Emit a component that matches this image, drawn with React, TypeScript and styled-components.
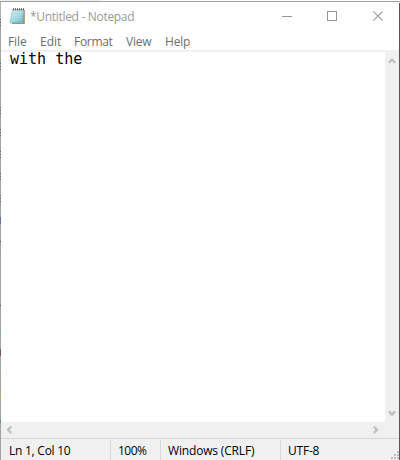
import React from "react";
import styled, { createGlobalStyle } from "styled-components";

const GlobalStyle = createGlobalStyle`
  * { box-sizing: border-box; }
  html, body { margin: 0; padding: 0; background: #fff; overflow: hidden; }
`;

const Window = styled.div`
  width: 400px;
  height: 460px;
  display: grid;
  grid-template-columns: 1px 398px 1px;
  grid-template-rows: 1px 1px 458px;
  background: #fff;
  font-family: "Open Sans", "Noto Sans", sans-serif;
  font-size: 12px;
  line-height: 16px;
`;

const Backdrop = styled.div`
  grid-column: 1 / -1;
  background: linear-gradient(to right, #eeeeee 101px, #ffffff 101px);
`;

const TopEdge = styled.div`
  grid-column: 1 / -1;
  background: #a0a0a0;
`;

const LeftEdge = styled.svg`
  display: block;
  width: 1px;
  height: 458px;
`;

const RightEdge = styled.div`
  background: linear-gradient(#fff 1px, #555555 1px);
`;

const Body = styled.div`
  display: flex;
  flex-direction: column;
  min-width: 0;
`;

const TitleBar = styled.div`
  height: 30px;
  display: flex;
  align-items: flex-start;
  padding-left: 8px;
  color: #999;
`;

const AppIcon = styled.svg`
  display: block;
  width: 17px;
  height: 18px;
  margin-top: 5px;
`;

const Title = styled.span`
  flex: 1;
  margin: 7px 0 0 4px;
`;

const Label = styled.span<{ $spacing?: number }>`
  white-space: pre;
  letter-spacing: ${(p) => p.$spacing ?? 0}px;
`;

const Controls = styled.svg`
  display: block;
  width: 138px;
  height: 30px;
`;

const MenuBar = styled.div`
  height: 18px;
  display: flex;
  padding-left: 7px;
  color: #6d6d6d;
`;

const MenuItem = styled.div<{ $width: number }>`
  width: ${(p) => p.$width}px;
  padding-top: 2px;
`;

const Main = styled.div`
  height: 372px;
  display: grid;
  grid-template-columns: 384px 14px;
  border-top: 2px solid #f0f0f0;
`;

const TextArea = styled.div`
  background: #fff;
  padding-left: 9px;
  color: #000;
  font: 15px/14px "DejaVu Sans Mono", monospace;
  white-space: pre;
`;

const VerticalScroll = styled.div`
  background: #f0f0f0;
  display: flex;
  flex-direction: column;
  justify-content: space-between;
  padding: 5px 0 5px 3px;
`;

const HorizontalScroll = styled.div`
  height: 16px;
  background: #f0f0f0;
  display: flex;
  justify-content: space-between;
  padding: 4px 20px 0 5px;
`;

const Arrow = styled.svg`
  display: block;
  width: 8px;
  height: 8px;
  overflow: visible;
  fill: none;
  stroke: #bfbfbf;
  stroke-width: 2.2;
`;

const StatusBar = styled.div`
  height: 22px;
  display: flex;
  background: #f0f0f0;
  border-top: 1px solid #d7d7d7;
  color: #000;
`;

const StatusCell = styled.div<{ $width: number; $divided?: boolean }>`
  width: ${(p) => p.$width}px;
  height: 20px;
  margin-top: 1px;
  padding: 3px 0 0 ${(p) => (p.$divided ? 7 : 8)}px;
  border-left: ${(p) => (p.$divided ? "1px solid #d7d7d7" : "none")};
`;

const Grip = styled.svg`
  display: block;
  width: 8px;
  height: 8px;
  margin: 12px 0 0 auto;
  fill: #bfbfbf;
`;

const edgeMarks: [number, number, string][] = [
  [0, 17, "#b0b0b0"],
  [17, 1, "#4f6675"], [20, 1, "#8a4d50"], [23, 1, "#5a7184"],
  [61, 1, "#56707b"], [64, 1, "#56707b"], [67, 1, "#56707b"],
  [105, 1, "#56707b"], [108, 1, "#56707b"], [111, 1, "#56707b"],
  [127, 1, "#56707b"], [130, 1, "#56707b"], [133, 1, "#56707b"],
  [149, 1, "#56707b"], [152, 1, "#56707b"], [155, 1, "#56707b"],
  [171, 1, "#56707b"], [174, 1, "#56707b"], [177, 1, "#56707b"],
  [193, 1, "#56707b"], [196, 1, "#56707b"], [199, 1, "#56707b"],
  [215, 7, "#60799a"], [239, 1, "#555"], [240, 10, "#9c9cab"],
  [303, 1, "#555"], [325, 8, "#8ca9a9"], [347, 7, "#7b5362"],
  [371, 3, "#b89e6c"], [388, 10, "#b5a780"], [418, 3, "#6384a0"],
];

const menus: [string, number, number][] = [
  ["File", 32, -0.1],
  ["Edit", 34, 0],
  ["Format", 52, -0.3],
  ["View", 39, -0.2],
  ["Help", 40, -0.2],
];

const statuses: [string, number, number][] = [
  ["Ln 1, Col 10", 109, -0.25],
  ["100%", 50, -0.5],
  ["Windows (CRLF)", 120, -0.17],
  ["UTF-8", 110, -0.2],
];

export default function App() {
  return (
    <>
      <GlobalStyle />
      <Window>
        <Backdrop />
        <TopEdge />
        <LeftEdge viewBox="0 0 1 458" shapeRendering="crispEdges">
          <rect width="1" height="458" fill="#a3a3a3" />
          {edgeMarks.map(([y, h, color]) => (
            <rect key={y} y={y} width="1" height={h} fill={color} />
          ))}
        </LeftEdge>
        <Body>
          <TitleBar>
            <AppIcon viewBox="0 0 17 18">
              <defs>
                <linearGradient id="page" x1="0" y1="0" x2="1" y2="1">
                  <stop offset="0" stopColor="#d6f0f6" />
                  <stop offset="0.5" stopColor="#a3d7e3" />
                  <stop offset="1" stopColor="#5cabc0" />
                </linearGradient>
              </defs>
              <path d="M14 3h1.8V17H3v-1h11z" fill="#a08c63" />
              <path d="M3.5 2.5h11.3L13.8 16H.9z" fill="url(#page)" stroke="#86b3c0" strokeWidth=".6" />
              <path d="M4 5.5h9.5M3.6 8h9.5M3.2 10.5h9.5M2.7 13h9.5" stroke="#c2e5ec" strokeWidth=".6" />
              <path d="M3.7 2.7h11.2" stroke="#a9b4b5" strokeWidth="1.2" />
              <path d="M4.5 1v2.3M6.5 1v2.3M8.5 1v2.3M10.5 1v2.3M12.5 1v2.3M14.5 1v2.3" stroke="#4f5557" strokeWidth=".8" />
            </AppIcon>
            <Title><Label $spacing={-0.31}>*Untitled - Notepad</Label></Title>
            <Controls viewBox="0 0 138 30" fill="none" stroke="#999">
              <path d="M21 14.5h10" shapeRendering="crispEdges" />
              <rect x="66.5" y="9.5" width="9" height="9" shapeRendering="crispEdges" />
              <path d="M112.3 9.3l9.4 9.4M121.7 9.3l-9.4 9.4" strokeWidth="1.1" />
            </Controls>
          </TitleBar>
          <MenuBar>
            {menus.map(([name, width, spacing]) => (
              <MenuItem key={name} $width={width}><Label $spacing={spacing}>{name}</Label></MenuItem>
            ))}
          </MenuBar>
          <Main>
            <TextArea>with the</TextArea>
            <VerticalScroll>
              <Arrow viewBox="0 0 8 8"><path d="M.8 5.8L4 2.6l3.2 3.2" /></Arrow>
              <Arrow viewBox="0 0 8 8"><path d="M.8 2.4L4 5.6l3.2-3.2" /></Arrow>
            </VerticalScroll>
          </Main>
          <HorizontalScroll>
            <Arrow viewBox="0 0 8 8"><path d="M5.2.6L2 3.8l3.2 3.2" /></Arrow>
            <Arrow viewBox="0 0 8 8"><path d="M2.8.6L6 3.8 2.8 7" /></Arrow>
          </HorizontalScroll>
          <StatusBar>
            {statuses.map(([name, width, spacing], i) => (
              <StatusCell key={name} $width={width} $divided={i > 0}><Label $spacing={spacing}>{name}</Label></StatusCell>
            ))}
            <Grip viewBox="0 0 8 8" shapeRendering="crispEdges">
              <path d="M6 0h2v2H6zM3 3h2v2H3zM6 3h2v2H6zM0 6h2v2H0zM3 6h2v2H3zM6 6h2v2H6z" />
            </Grip>
          </StatusBar>
        </Body>
        <RightEdge />
      </Window>
    </>
  );
}
